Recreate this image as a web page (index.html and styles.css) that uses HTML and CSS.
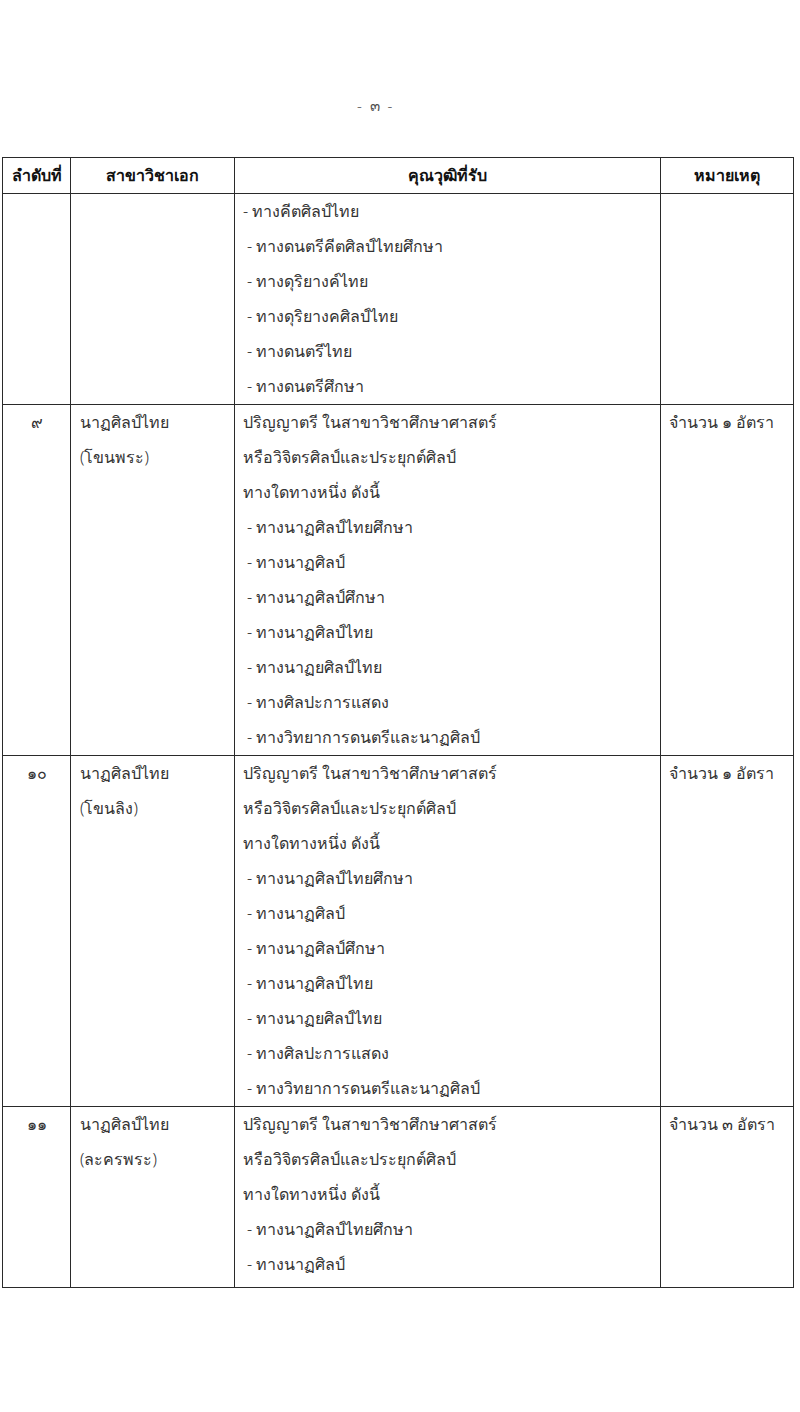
FILE: index.html
```html
<!DOCTYPE html>
<html lang="th">
<head>
<meta charset="utf-8">
<title>หน้า ๓</title>
<link rel="stylesheet" href="styles.css">
</head>
<body>
<div class="page">
  <div class="pageno">-&nbsp;&nbsp;๓&nbsp;&nbsp;-</div>
  <table class="tbl">
    <colgroup>
      <col class="c1"><col class="c2"><col class="c3"><col class="c4">
    </colgroup>
    <thead>
      <tr>
        <th>ลำดับที่</th>
        <th>สาขาวิชาเอก</th>
        <th>คุณวุฒิที่รับ</th>
        <th>หมายเหตุ</th>
      </tr>
    </thead>
    <tbody>
      <tr>
        <td class="num"></td>
        <td class="major"></td>
        <td class="qual">
          <div class="first">- ทางคีตศิลป์ไทย</div>
          <div class="item">- ทางดนตรีคีตศิลป์ไทยศึกษา</div>
          <div class="item">- ทางดุริยางค์ไทย</div>
          <div class="item">- ทางดุริยางคศิลป์ไทย</div>
          <div class="item">- ทางดนตรีไทย</div>
          <div class="item">- ทางดนตรีศึกษา</div>
        </td>
        <td class="note"></td>
      </tr>
      <tr>
        <td class="num">๙</td>
        <td class="major"><div>นาฏศิลป์ไทย</div><div>(โขนพระ)</div></td>
        <td class="qual">
          <div>ปริญญาตรี ในสาขาวิชาศึกษาศาสตร์</div>
          <div>หรือวิจิตรศิลป์และประยุกต์ศิลป์</div>
          <div>ทางใดทางหนึ่ง ดังนี้</div>
          <div class="item">- ทางนาฏศิลป์ไทยศึกษา</div>
          <div class="item">- ทางนาฏศิลป์</div>
          <div class="item">- ทางนาฏศิลป์ศึกษา</div>
          <div class="item">- ทางนาฏศิลป์ไทย</div>
          <div class="item">- ทางนาฏยศิลป์ไทย</div>
          <div class="item">- ทางศิลปะการแสดง</div>
          <div class="item">- ทางวิทยาการดนตรีและนาฏศิลป์</div>
        </td>
        <td class="note">จำนวน ๑ อัตรา</td>
      </tr>
      <tr>
        <td class="num">๑๐</td>
        <td class="major"><div>นาฏศิลป์ไทย</div><div>(โขนลิง)</div></td>
        <td class="qual">
          <div>ปริญญาตรี ในสาขาวิชาศึกษาศาสตร์</div>
          <div>หรือวิจิตรศิลป์และประยุกต์ศิลป์</div>
          <div>ทางใดทางหนึ่ง ดังนี้</div>
          <div class="item">- ทางนาฏศิลป์ไทยศึกษา</div>
          <div class="item">- ทางนาฏศิลป์</div>
          <div class="item">- ทางนาฏศิลป์ศึกษา</div>
          <div class="item">- ทางนาฏศิลป์ไทย</div>
          <div class="item">- ทางนาฏยศิลป์ไทย</div>
          <div class="item">- ทางศิลปะการแสดง</div>
          <div class="item">- ทางวิทยาการดนตรีและนาฏศิลป์</div>
        </td>
        <td class="note">จำนวน ๑ อัตรา</td>
      </tr>
      <tr class="last">
        <td class="num">๑๑</td>
        <td class="major"><div>นาฏศิลป์ไทย</div><div>(ละครพระ)</div></td>
        <td class="qual">
          <div>ปริญญาตรี ในสาขาวิชาศึกษาศาสตร์</div>
          <div>หรือวิจิตรศิลป์และประยุกต์ศิลป์</div>
          <div>ทางใดทางหนึ่ง ดังนี้</div>
          <div class="item">- ทางนาฏศิลป์ไทยศึกษา</div>
          <div class="item">- ทางนาฏศิลป์</div>
        </td>
        <td class="note">จำนวน ๓ อัตรา</td>
      </tr>
    </tbody>
  </table>
</div>
</body>
</html>
```

FILE: styles.css
```css
html, body {
  margin: 0;
  padding: 0;
  background: #ffffff;
}
body {
  font-family: "Noto Sans", "DejaVu Sans", sans-serif;
  color: #333333;
  font-size: 16px;
  font-weight: 300;
}
.page {
  width: 800px;
  height: 1412px;
  box-sizing: border-box;
  padding-top: 92px;
}
.pageno {
  height: 65px;
  line-height: 26px;
  padding-left: 357px;
  font-size: 15px;
  color: #555555;
}
.tbl {
  margin-left: 2px;
  width: 791px;
  border-collapse: collapse;
  table-layout: fixed;
}
.c1 { width: 68px; }
.c2 { width: 164px; }
.c3 { width: 426px; }
.c4 { width: 133px; }
.tbl th, .tbl td {
  border: 1px solid #2a2a2a;
  padding: 0;
  vertical-align: top;
  line-height: 35px;
}
.tbl th {
  height: 35px;
  font-weight: bold;
  text-align: center;
  color: #111111;
}
.tbl .last td {
  padding-bottom: 5px;
}
.num {
  text-align: center;
}
.major {
  padding-left: 9px !important;
}
.qual {
  padding-left: 8px !important;
}
.qual .item {
  padding-left: 4px;
}
.note {
  padding-left: 8px !important;
}
```
